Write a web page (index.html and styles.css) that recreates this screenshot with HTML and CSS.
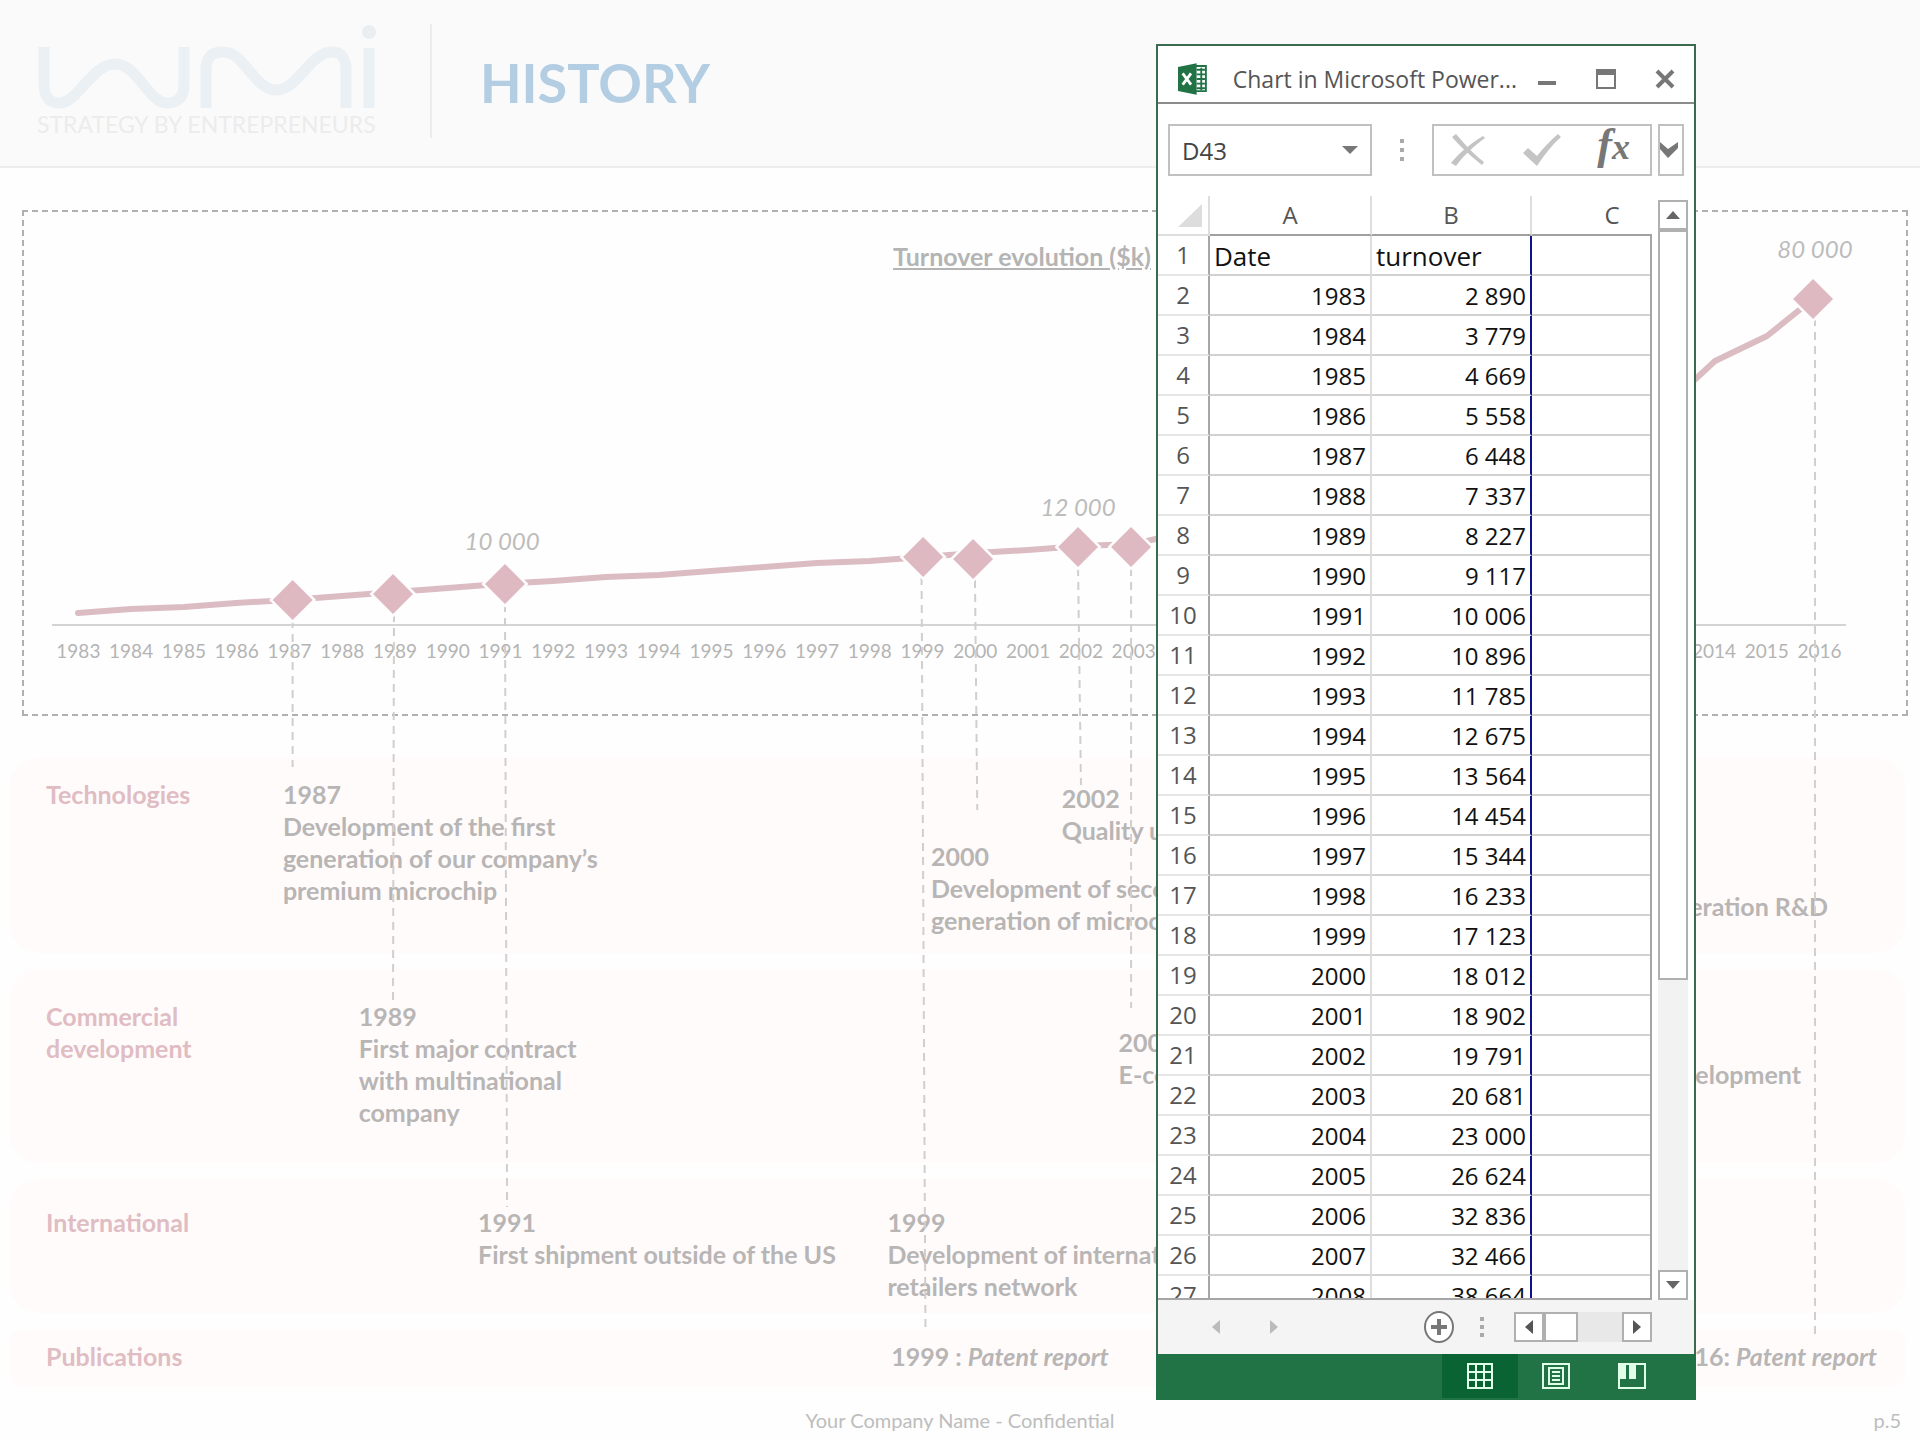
FILE: index.html
```html
<!DOCTYPE html>
<html lang="en">
<head>
    <meta charset="UTF-8">
    <meta name="viewport" content="width=device-width, initial-scale=1.0">
    <title>History</title>
    <link rel="stylesheet" href="styles.css">
</head>
<body>
    <div class="slide">
        <header class="header">
            <div class="logo">
                <svg width="340" height="86" viewBox="37 22 340 86" aria-hidden="true">
                    <g fill="none" stroke="#eaf0f3" stroke-width="11">
                        <path d="M44 45V82C44 95 50 101 59 101C78 101 92 62 115 62C138 62 148 101 167 101C178 101 184 95 184 82V45"/>
                        <path d="M206 106V68C206 55 212 50 223 50C245 50 254 88 276 88C298 88 310 50 332 50C342 50 346 57 346 68V106"/>
                        <path d="M369 46V106"/>
                    </g>
                    <circle cx="369" cy="30" r="7" fill="#eaeef1"/>
                </svg>
                <span class="tagline">STRATEGY BY ENTREPRENEURS</span>
            </div>
            <h1>HISTORY</h1>
        </header>

        <main>
            <section class="chart">
                <h2>Turnover evolution ($k)</h2>
                <div class="years">
                    <span>1983</span><span>1984</span><span>1985</span><span>1986</span><span>1987</span><span>1988</span><span>1989</span>
                    <span>1990</span><span>1991</span><span>1992</span><span>1993</span><span>1994</span><span>1995</span><span>1996</span>
                    <span>1997</span><span>1998</span><span>1999</span><span>2000</span><span>2001</span><span>2002</span><span>2003</span>
                    <span>2004</span><span>2005</span><span>2006</span><span>2007</span><span>2008</span><span>2009</span><span>2010</span>
                    <span>2011</span><span>2012</span><span>2013</span><span>2014</span><span>2015</span><span>2016</span>
                </div>
            </section>

            <div class="lanes">
                <section class="lane technologies">
                    <h3>Technologies</h3>
                    <p class="event y1987">1987<br>Development of the first<br>generation of our company’s<br>premium microchip</p>
                    <p class="event y2000">2000<br>Development of second<br>generation of microchip</p>
                    <p class="event y2002">2002<br>Quality unit</p>
                    <p class="event right y2014">2014<br>New generation R&amp;D</p>
                </section>
                <section class="lane commercial">
                    <h3>Commercial<br>development</h3>
                    <p class="event y1989">1989<br>First major contract<br>with multinational<br>company</p>
                    <p class="event y2003">2003<br>E-commerce</p>
                    <p class="event right y2012">2012<br>Market development</p>
                </section>
                <section class="lane international">
                    <h3>International</h3>
                    <p class="event y1991">1991<br>First shipment outside of the US</p>
                    <p class="event y1999">1999<br>Development of international<br>retailers network</p>
                </section>
                <section class="lane publications">
                    <h3>Publications</h3>
                    <p class="event report">1999 : <em>Patent report</em></p>
                    <p class="event right y2016">2016: <em>Patent report</em></p>
                </section>
            </div>
        </main>

        <footer class="footer">
            <span class="company">Your Company Name - Confidential</span>
            <span class="page">p.5</span>
        </footer>

        <!-- turnover line, milestones and the leaders down to the lanes -->
        <svg class="plot" width="100%" height="1440">
            <defs>
                <path id="diamond" d="M0 -20L20 0L0 20L-20 0Z"/>
            </defs>
            <g class="leaders">
                <line x1="15.24%" y1="620" x2="15.24%" y2="767"/>
                <line x1="20.52%" y1="614" x2="20.47%" y2="1001"/>
                <line x1="26.3%" y1="604" x2="26.41%" y2="1207"/>
                <line x1="48%" y1="577" x2="48.2%" y2="1327"/>
                <line x1="50.78%" y1="580" x2="50.9%" y2="810"/>
                <line x1="56.15%" y1="568" x2="56.3%" y2="785"/>
                <line x1="58.91%" y1="568" x2="58.91%" y2="1008"/>
                <line x1="94.53%" y1="318" x2="94.53%" y2="1337"/>
            </g>
            <svg width="100%" height="1440" viewBox="0 0 1920 1440" preserveAspectRatio="none">
                <polyline class="turnover" points="78,613 131,609 184,607 236,603 289,600 342,596 395,592 448,588 500,584 553,581 606,577 659,575 711,571 764,567 817,563 870,561 923,557 975,553 1028,550 1081,546 1134,544 1186,532 1239,518 1292,494 1345,495 1398,470 1450,462 1503,448 1556,436 1609,420 1662,410 1715,361 1767,336 1813,299"/>
            </svg>
            <g class="markers">
                <use href="#diamond" x="15.24%" y="600"/>
                <use href="#diamond" x="20.47%" y="594"/>
                <use href="#diamond" x="26.3%" y="584"/>
                <use href="#diamond" x="48.08%" y="557"/>
                <use href="#diamond" x="50.68%" y="559"/>
                <use href="#diamond" x="56.15%" y="547"/>
                <use href="#diamond" x="58.91%" y="547"/>
                <use href="#diamond" x="94.43%" y="299"/>
            </g>
            <g class="values">
                <text x="26.15%" y="550">10 000</text>
                <text x="56.15%" y="516">12 000</text>
                <text x="94.53%" y="258">80 000</text>
            </g>
        </svg>

        <div class="window">
            <div class="titlebar">
                <svg class="app-icon" width="32" height="34" viewBox="0 0 32 34" aria-hidden="true">
                    <path d="M18 3H30V30H18Z" fill="#fff" stroke="#217346" stroke-width="2"/>
                    <path d="M20 7H29M20 12H29M20 17H29M20 22H29M20 27H29M25 5V29" stroke="#217346" stroke-width="2"/>
                    <path d="M0 4L20 0V34L0 30Z" fill="#217346"/>
                    <path d="M5 11L14 23M14 11L5 23" stroke="#fff" stroke-width="3"/>
                </svg>
                <span class="title">Chart in Microsoft Power...</span>
                <div class="controls">
                    <button type="button" aria-label="Minimize"><svg width="20" height="20"><path d="M1 14H19" stroke="#777" stroke-width="4"/></svg></button>
                    <button type="button" aria-label="Maximize"><svg width="20" height="20"><path d="M1 1H19V19H1Z" fill="none" stroke="#777" stroke-width="2"/><path d="M0 3H20" stroke="#777" stroke-width="6"/></svg></button>
                    <button type="button" aria-label="Close"><svg width="20" height="20"><path d="M2 2L18 18M18 2L2 18" stroke="#777" stroke-width="4"/></svg></button>
                </div>
            </div>

            <div class="formula-bar">
                <div class="name-box">
                    <select aria-label="Name box"><option>D43</option></select>
                    <svg width="16" height="8"><path d="M0 0H16L8 8Z" fill="#777"/></svg>
                </div>
                <svg class="dots" width="4" height="22" aria-hidden="true"><path d="M0 2H4M0 11H4M0 20H4" stroke="#aaa" stroke-width="4"/></svg>
                <div class="fx-box">
                    <button type="button" aria-label="Cancel"><svg width="36" height="34"><path d="M2 4L6 1C12 8 22 20 34 29L32 32C20 23 10 13 2 4ZM33 3L35 5C24 13 14 22 6 33L1 30C10 19 20 11 33 3Z" fill="#c4c4c4"/></svg></button>
                    <button type="button" aria-label="Enter"><svg width="40" height="34"><path d="M1 20L6 15L15 23C21 15 28 8 36 1L39 4C30 12 22 22 15 33Z" fill="#c4c4c4"/></svg></button>
                    <button type="button" class="fx" aria-label="Insert function"><i class="f">f</i><i class="x">x</i></button>
                </div>
                <button type="button" class="expand" aria-label="Expand formula bar"><svg width="18" height="16"><path d="M0 0L8 7L18 0V6L8 16L0 7Z" fill="#777"/></svg></button>
            </div>

            <div class="sheet">
                <div class="cells">
                    <table>
                        <thead>
                            <tr><th class="corner"><svg width="24" height="23"><path d="M24 0V23H0Z" fill="#ddd"/></svg></th><th>A</th><th class="narrow">B</th><th>C</th></tr>
                        </thead>
                        <tbody>
                            <tr class="names"><th>1</th><td>Date</td><td>turnover</td><td></td></tr>
                            <tr><th>2</th><td>1983</td><td>2 890</td><td></td></tr>
                            <tr><th>3</th><td>1984</td><td>3 779</td><td></td></tr>
                            <tr><th>4</th><td>1985</td><td>4 669</td><td></td></tr>
                            <tr><th>5</th><td>1986</td><td>5 558</td><td></td></tr>
                            <tr><th>6</th><td>1987</td><td>6 448</td><td></td></tr>
                            <tr><th>7</th><td>1988</td><td>7 337</td><td></td></tr>
                            <tr><th>8</th><td>1989</td><td>8 227</td><td></td></tr>
                            <tr><th>9</th><td>1990</td><td>9 117</td><td></td></tr>
                            <tr><th>10</th><td>1991</td><td>10 006</td><td></td></tr>
                            <tr><th>11</th><td>1992</td><td>10 896</td><td></td></tr>
                            <tr><th>12</th><td>1993</td><td>11 785</td><td></td></tr>
                            <tr><th>13</th><td>1994</td><td>12 675</td><td></td></tr>
                            <tr><th>14</th><td>1995</td><td>13 564</td><td></td></tr>
                            <tr><th>15</th><td>1996</td><td>14 454</td><td></td></tr>
                            <tr><th>16</th><td>1997</td><td>15 344</td><td></td></tr>
                            <tr><th>17</th><td>1998</td><td>16 233</td><td></td></tr>
                            <tr><th>18</th><td>1999</td><td>17 123</td><td></td></tr>
                            <tr><th>19</th><td>2000</td><td>18 012</td><td></td></tr>
                            <tr><th>20</th><td>2001</td><td>18 902</td><td></td></tr>
                            <tr><th>21</th><td>2002</td><td>19 791</td><td></td></tr>
                            <tr><th>22</th><td>2003</td><td>20 681</td><td></td></tr>
                            <tr><th>23</th><td>2004</td><td>23 000</td><td></td></tr>
                            <tr><th>24</th><td>2005</td><td>26 624</td><td></td></tr>
                            <tr><th>25</th><td>2006</td><td>32 836</td><td></td></tr>
                            <tr><th>26</th><td>2007</td><td>32 466</td><td></td></tr>
                            <tr><th>27</th><td>2008</td><td>38 664</td><td></td></tr>
                        </tbody>
                    </table>
                </div>
                <div class="vscroll">
                    <button type="button" aria-label="Scroll up"><svg width="14" height="8"><path d="M0 8H14L7 0Z" fill="#666"/></svg></button>
                    <div class="thumb"></div>
                    <button type="button" class="end" aria-label="Scroll down"><svg width="14" height="8"><path d="M0 0H14L7 8Z" fill="#666"/></svg></button>
                </div>
            </div>

            <div class="tabs">
                <button type="button" aria-label="Previous sheet"><svg width="8" height="14"><path d="M8 0V14L0 7Z" fill="#bbb"/></svg></button>
                <button type="button" aria-label="Next sheet"><svg width="8" height="14"><path d="M0 0V14L8 7Z" fill="#bbb"/></svg></button>
                <button type="button" class="add" aria-label="New sheet"><svg width="30" height="32"><ellipse cx="15" cy="16" rx="14" ry="15" fill="#fff" stroke="#777" stroke-width="2"/><path d="M7 16H23M15 8V24" stroke="#777" stroke-width="4"/></svg></button>
                <svg class="dots" width="4" height="20" aria-hidden="true"><path d="M0 2H4M0 10H4M0 18H4" stroke="#aaa" stroke-width="4"/></svg>
                <div class="hscroll">
                    <button type="button" aria-label="Scroll left"><svg width="8" height="14"><path d="M8 0V14L0 7Z" fill="#555"/></svg></button>
                    <div class="thumb"></div>
                    <button type="button" class="end" aria-label="Scroll right"><svg width="8" height="14"><path d="M0 0V14L8 7Z" fill="#555"/></svg></button>
                </div>
            </div>

            <div class="status">
                <button type="button" class="active" aria-label="Normal view"><svg width="26" height="26"><path d="M1 1H25V25H1ZM1 9H25M1 17H25M9 1V25M17 1V25" fill="none" stroke="#dfffe9" stroke-width="2"/></svg></button>
                <button type="button" aria-label="Page layout view"><svg width="28" height="26"><path d="M1 1H27V25H1ZM7 5H21V21H7ZM10 9H18M10 13H18M10 17H18" fill="none" stroke="#dfffe9" stroke-width="2"/></svg></button>
                <button type="button" aria-label="Page break view"><svg width="28" height="26"><path d="M1 1H27V25H1Z" fill="none" stroke="#dfffe9" stroke-width="2"/><path d="M1 1H8V16H1ZM11 1H18V16H11Z" fill="#dfffe9"/></svg></button>
            </div>
        </div>
    </div>
</body>
</html>
```
FILE: styles.css
```css
* {
    box-sizing: border-box;
}
body {
    margin: 0;
    background-color: #fefefe;
    font-family: Lato, "Liberation Sans", sans-serif;
}
h1, h2, h3, p {
    margin: 0;
}
button {
    display: flex;
    align-items: center;
    justify-content: center;
    padding: 0;
    border: none;
    background: none;
}
svg {
    display: block;
}
.slide {
    position: relative;
    overflow: hidden;
}

/* header */
.header {
    display: flex;
    align-items: center;
    height: 168px;
    padding: 0 37px 4px;
    background-color: #fafafa;
    border-bottom: 2px solid #ededed;
}
.logo {
    width: 395px;
    height: 114px;
    border-right: 2px solid #ececec;
}
.tagline {
    display: block;
    font-size: 23px;
    line-height: 28px;
    color: #ececec;
    white-space: nowrap;
}
.header h1 {
    margin-top: 4px;
    margin-left: 48px;
    font-size: 54px;
    line-height: 64px;
    color: #b3cde3;
}

/* chart */
.chart {
    display: flex;
    flex-direction: column;
    justify-content: space-between;
    height: 506px;
    margin: 42px 12px 0 22px;
    padding: 28px 60px 48px 28px;
    border: 2px dashed #b0b0b0;
}
.chart h2 {
    padding-left: 146px;
    font-size: 25px;
    line-height: 32px;
    text-align: center;
    text-decoration: underline;
    color: #b4b4b4;
}
.years {
    display: grid;
    grid-template-columns: repeat(34, 1fr);
    padding-top: 10px;
    border-top: 2px solid #d4d4d4;
    font-size: 19px;
    line-height: 30px;
    text-align: center;
    color: #b4b4b4;
}
.plot {
    position: absolute;
    top: 0;
    left: 0;
    pointer-events: none;
}
.leaders {
    stroke: #d2cecd;
    stroke-width: 2;
    stroke-dasharray: 8 6;
}
.turnover {
    fill: none;
    stroke: #dcbcc3;
    stroke-width: 6;
    stroke-linecap: round;
    stroke-linejoin: round;
}
.markers {
    fill: #dfb9c1;
    stroke: #fefefe;
    stroke-width: 5;
    paint-order: stroke;
}
.values {
    fill: #bcbcbc;
    font-size: 24px;
    font-style: italic;
    text-anchor: middle;
}

/* lanes */
.lanes {
    display: flex;
    flex-direction: column;
    gap: 16px;
    margin: 42px 15px 0 10px;
}
.lane {
    display: grid;
    justify-items: start;
    align-items: start;
    border-radius: 28px;
    background-color: #fffbfb;
    line-height: 32px;
}
.lane h3,
.event {
    grid-area: 1 / 1;
    font-size: 25px;
    font-weight: bold;
    color: #b8b5b5;
    white-space: nowrap;
}
.lane h3 {
    padding-left: 36px;
    color: #e0bcc3;
}
.lane .right {
    justify-self: end;
}
.technologies {
    min-height: 195px;
    padding-top: 20px;
}
.commercial {
    min-height: 194px;
    padding-top: 31px;
}
.international {
    min-height: 134px;
    padding-top: 27px;
}
.publications {
    min-height: 58px;
    padding-top: 11px;
    border-radius: 12px;
}
.y1987 { margin-left: 14.4%; }
.y1989 { margin-left: 18.4%; }
.y1991 { margin-left: 24.7%; }
.y1999 { margin-left: 46.3%; }
.report { margin-left: 46.5%; }
.y2000 { margin: 62px 0 0 48.6%; }
.y2002 { margin: 4px 0 0 55.5%; }
.y2003 { margin: 26px 0 0 58.5%; }
.y2012 { margin: 26px 104px 0 0; }
.y2014 { margin: 80px 77px 0 0; }
.y2016 { margin-right: 28px; }

.footer {
    display: grid;
    grid-template-columns: 1fr auto 1fr;
    padding: 18px 19px 6px;
    font-size: 20px;
    line-height: 30px;
    color: #bdbdbd;
}
.company {
    grid-column: 2;
}
.page {
    text-align: right;
}

/* spreadsheet window */
.window {
    position: absolute;
    top: 44px;
    right: 224px;
    display: flex;
    flex-direction: column;
    width: 540px;
    height: 1356px;
    border: 2px solid #3a6b51;
    background-color: #fff;
    font-family: "Open Sans", "Noto Sans", sans-serif;
    font-size: 24px;
    color: #555;
}
.titlebar {
    display: flex;
    align-items: center;
    height: 58px;
    padding-top: 10px;
    padding-left: 20px;
    border-bottom: 2px solid #8c8c8c;
}
.title {
    margin-left: 25px;
    font-size: 23px;
    white-space: nowrap;
}
.controls {
    display: flex;
    margin-left: auto;
}
.controls button {
    width: 59px;
    height: 40px;
}
.formula-bar {
    display: flex;
    align-items: center;
    height: 92px;
    padding: 0 10px;
}
.name-box {
    display: flex;
    align-items: center;
    width: 204px;
    height: 52px;
    border: 2px solid #c0c0c0;
}
.name-box select {
    flex: 1;
    height: 48px;
    padding: 0 0 0 12px;
    border: none;
    background: none;
    appearance: none;
    font: inherit;
    color: #444;
}
.name-box svg {
    margin-right: 12px;
}
.formula-bar .dots {
    margin: 0 28px;
}
.fx-box {
    display: flex;
    align-items: center;
    justify-content: space-between;
    width: 220px;
    height: 52px;
    padding: 0 20px 0 16px;
    border: 2px solid #c0c0c0;
}
.fx {
    align-items: baseline;
    padding-bottom: 8px;
    font-family: "Liberation Serif", serif;
    font-weight: bold;
    color: #777;
}
.f {
    font-size: 44px;
    line-height: 44px;
}
.x {
    font-size: 36px;
    line-height: 44px;
}
.expand {
    justify-content: flex-start;
    width: 26px;
    height: 52px;
    margin-left: 6px;
    border: 2px solid #c0c0c0;
}

.sheet {
    display: flex;
    flex: 1;
    min-height: 0;
}
.cells {
    position: relative;
    width: 494px;
    overflow: hidden;
    border-bottom: 2px solid #a6a6a6;
}
.cells::after {
    content: "";
    position: absolute;
    top: 38px;
    right: 0;
    bottom: 0;
    width: 2px;
    background-color: #a6a6a6;
}
table {
    width: 534px;
    table-layout: fixed;
    border-collapse: separate;
    border-spacing: 0;
    line-height: 32px;
}
th {
    height: 40px;
    padding: 3px 0;
    border-right: 2px solid #a6a6a6;
    border-bottom: 2px solid #e6e6e6;
    font-weight: normal;
    color: #555;
}
thead th {
    width: 162px;
    height: 40px;
    border-right: 2px solid #dedede;
    border-bottom: 2px solid #a0a0a0;
}
thead .narrow {
    width: 160px;
}
thead .corner {
    width: 52px;
    border-bottom-color: #dedede;
}
.corner svg {
    margin-left: 20px;
}
td {
    height: 40px;
    padding: 4px 4px 2px;
    border-right: 2px solid #dedede;
    border-bottom: 2px solid #d2d2d2;
    text-align: right;
    color: #111;
}
td:nth-child(3) {
    border-right-color: #10108a;
}
.names td {
    font-size: 26px;
    text-align: left;
}

.vscroll {
    display: flex;
    flex-direction: column;
    width: 30px;
    margin: 4px 0 0 6px;
    background-color: #f2f2f2;
}
.vscroll button,
.hscroll button,
.thumb {
    border: 2px solid #b0b0b0;
    background-color: #fff;
}
.vscroll button {
    height: 30px;
}
.vscroll .thumb {
    height: 750px;
}
.vscroll .end,
.hscroll .end {
    margin-top: auto;
    margin-left: auto;
}
.vscroll .end {
    width: 30px;
}

.tabs {
    display: flex;
    align-items: center;
    gap: 28px;
    height: 54px;
    padding: 0 42px 0 43px;
    background-color: #f4f4f4;
}
.tabs button {
    width: 30px;
    height: 30px;
}
.tabs .add {
    margin-left: auto;
}
.tabs .dots {
    margin-left: -2px;
    margin-right: 2px;
}
.hscroll {
    display: flex;
    width: 138px;
    background-color: #e8e8e8;
}
.hscroll .thumb {
    width: 34px;
}
.hscroll .end {
    margin-top: 0;
}

.status {
    display: flex;
    justify-content: flex-end;
    height: 46px;
    margin: 0 -2px -2px;
    padding-right: 26px;
    background-color: #217346;
}
.status button {
    width: 76px;
    height: 44px;
}
.status .active {
    background-color: #0a6332;
}
```
